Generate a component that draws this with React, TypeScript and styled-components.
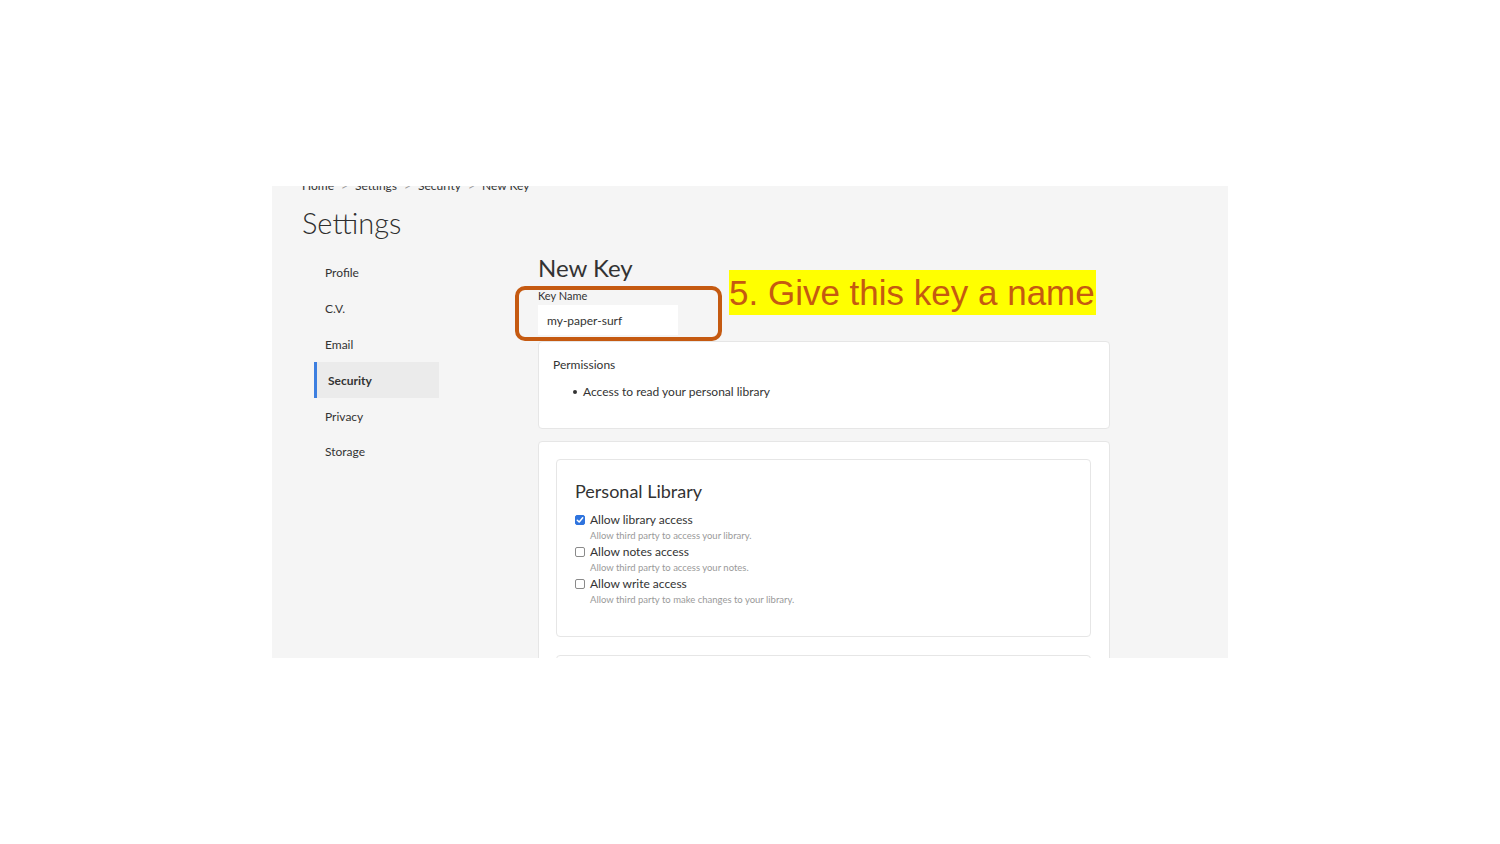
import React from "react";
import styled, { createGlobalStyle } from "styled-components";

const GlobalStyle = createGlobalStyle`
  html, body { margin: 0; padding: 0; background: #ffffff; }
  body { font-family: Lato, "Noto Sans", sans-serif; color: #333; }
  * { box-sizing: border-box; }
`;

const Page = styled.div`
  width: 100vw;
  height: 100vh;
  display: flex;
  align-items: center;
  justify-content: center;
`;

const Stage = styled.div`
  position: relative;
  width: 956px;
  height: 472px;
`;

const Shot = styled.div`
  width: 100%;
  height: 100%;
  overflow: hidden;
  background: #f5f5f5;
  display: flex;
  flex-direction: column;
`;

const Breadcrumb = styled.div`
  margin-top: -8px;
  padding-left: 30px;
  font-size: 12px;
  line-height: 16px;
  color: #333;
  display: flex;
  gap: 7px;
`;

const Sep = styled.span`
  color: #999;
`;

const Title = styled.h1`
  margin: 9px 0 0 30px;
  font-size: 29px;
  line-height: 40px;
  font-weight: 300;
  color: #2e2e2e;
`;

const Body = styled.div`
  margin-top: 12px;
  display: flex;
  align-items: flex-start;
`;

const Nav = styled.nav`
  margin-left: 42px;
  width: 125px;
  display: flex;
  flex-direction: column;
`;

const NavItem = styled.div<{ $active?: boolean }>`
  height: 35.8px;
  display: flex;
  align-items: center;
  font-size: 12px;
  color: #333;
  padding-left: 11px;
  border-left: ${(p) => (p.$active ? "3px solid #3d7fe0" : "0")};
  background: ${(p) => (p.$active ? "#ebebeb" : "transparent")};
  font-weight: ${(p) => (p.$active ? 700 : 400)};
`;

const Main = styled.div`
  margin-left: 99px;
  width: 572px;
  display: flex;
  flex-direction: column;
`;

const Heading = styled.h2`
  margin: -1px 0 1px;
  font-size: 24px;
  line-height: 28px;
  font-weight: 400;
  color: #333;
`;

const Label = styled.div`
  margin-top: 6px;
  font-size: 11px;
  line-height: 14px;
  color: #333;
`;

const Input = styled.div`
  margin-top: 2px;
  width: 140px;
  height: 30px;
  background: #fff;
  display: flex;
  align-items: center;
  padding-left: 9px;
  font-size: 12px;
  color: #333;
`;

const Card = styled.div<{ $gap: number }>`
  margin-top: ${(p) => p.$gap}px;
  background: #fff;
  border: 1px solid #e6e6e6;
  border-radius: 4px;
`;

const PermCard = styled(Card)`
  height: 88px;
  padding: 15px 14px 0;
`;

const SmallText = styled.div`
  font-size: 12px;
  line-height: 16px;
  color: #333;
`;

const Bullets = styled.ul`
  margin: 11px 0 0;
  padding: 0 0 0 20px;
  list-style: none;
  font-size: 12px;
  line-height: 16px;
  color: #333;
`;

const Bullet = styled.li`
  display: flex;
  align-items: center;
  gap: 6px;
  &::before {
    content: "";
    width: 4px;
    height: 4px;
    border-radius: 50%;
    background: #333;
  }
`;

const OuterCard = styled(Card)`
  padding: 17px 18px 0 17px;
  height: 240px;
`;

const InnerCard = styled.div<{ $mt?: number }>`
  margin-top: ${(p) => p.$mt ?? 0}px;
  border: 1px solid #e6e6e6;
  border-radius: 4px;
  background: #fff;
  padding: 19px 18px 0;
  height: 178px;
`;

const SectionTitle = styled.h3`
  margin: 0;
  font-size: 18px;
  line-height: 24px;
  font-weight: 400;
  color: #333;
`;

const Options = styled.div`
  margin-top: 9px;
  display: flex;
  flex-direction: column;
`;

const Option = styled.div`
  display: grid;
  grid-template-columns: 10px 1fr;
  column-gap: 5px;
  padding-bottom: 2px;
`;

const Box = styled.span<{ $checked?: boolean }>`
  margin-top: 3px;
  width: 10px;
  height: 10px;
  border-radius: 2px;
  border: 1px solid ${(p) => (p.$checked ? "#2f74de" : "#8a8a8a")};
  background: ${(p) => (p.$checked ? "#2f74de" : "#fff")};
  display: flex;
  align-items: center;
  justify-content: center;
`;

const OptLabel = styled.div`
  font-size: 12px;
  line-height: 16px;
  color: #333;
`;

const OptDesc = styled.div`
  grid-column: 2;
  margin-top: 2px;
  font-size: 9.5px;
  line-height: 12px;
  color: #9a9a9a;
`;

const Highlight = styled.div`
  position: absolute;
  left: 243px;
  top: 100px;
  width: 207px;
  height: 55px;
  border: 4px solid #c55a11;
  border-radius: 10px;
`;

const Callout = styled.div`
  position: absolute;
  left: 457px;
  top: 84px;
  height: 45px;
  background: #ffff00;
  font-family: "Liberation Sans", Arial, sans-serif;
  font-size: 35px;
  line-height: 45px;
  color: #c55a11;
  white-space: nowrap;
  padding-right: 1px;
`;

const Check = () => (
  <svg width="8" height="8" viewBox="0 0 8 8">
    <path d="M1.3 4.2 L3.2 6 L6.7 1.8" fill="none" stroke="#fff" strokeWidth="1.5" strokeLinecap="round" strokeLinejoin="round" />
  </svg>
);

const navItems = ["Profile", "C.V.", "Email", "Security", "Privacy", "Storage"];

const options = [
  { label: "Allow library access", desc: "Allow third party to access your library.", checked: true },
  { label: "Allow notes access", desc: "Allow third party to access your notes.", checked: false },
  { label: "Allow write access", desc: "Allow third party to make changes to your library.", checked: false },
];

export default function App() {
  return (
    <>
      <GlobalStyle />
      <Page>
        <Stage>
          <Shot>
            <Breadcrumb>
              <span>Home</span>
              <Sep>&gt;</Sep>
              <span>Settings</span>
              <Sep>&gt;</Sep>
              <span>Security</span>
              <Sep>&gt;</Sep>
              <span>New Key</span>
            </Breadcrumb>
            <Title>Settings</Title>
            <Body>
              <Nav>
                {navItems.map((n) => (
                  <NavItem key={n} $active={n === "Security"}>
                    {n}
                  </NavItem>
                ))}
              </Nav>
              <Main>
                <Heading>New Key</Heading>
                <Label>Key Name</Label>
                <Input>my-paper-surf</Input>
                <PermCard $gap={6}>
                  <SmallText>Permissions</SmallText>
                  <Bullets>
                    <Bullet>Access to read your personal library</Bullet>
                  </Bullets>
                </PermCard>
                <OuterCard $gap={12}>
                  <InnerCard>
                    <SectionTitle>Personal Library</SectionTitle>
                    <Options>
                      {options.map((o) => (
                        <Option key={o.label}>
                          <Box $checked={o.checked}>{o.checked && <Check />}</Box>
                          <OptLabel>{o.label}</OptLabel>
                          <OptDesc>{o.desc}</OptDesc>
                        </Option>
                      ))}
                    </Options>
                  </InnerCard>
                  <InnerCard $mt={18} />
                </OuterCard>
              </Main>
            </Body>
          </Shot>
          <Highlight />
          <Callout>5. Give this key a name</Callout>
        </Stage>
      </Page>
    </>
  );
}
